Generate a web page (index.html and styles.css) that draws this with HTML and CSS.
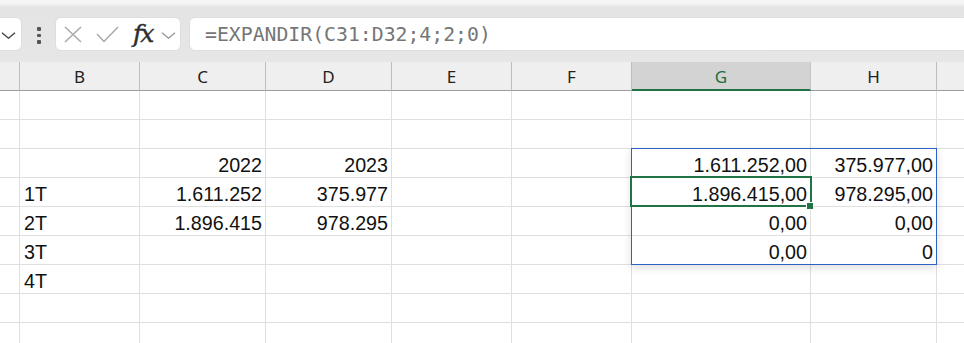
FILE: index.html
```html
<!DOCTYPE html>
<html>
<head>
<meta charset="utf-8">
<link rel="stylesheet" href="styles.css">
</head>
<body>
<div class="topbar">
  <div class="namebox">
    <svg class="chev" width="15" height="7" viewBox="0 0 15 7"><path d="M1 0.8 L7.5 6.2 L14 0.8" fill="none" stroke="#444" stroke-width="1.4"/></svg>
  </div>
  <div class="dots"><i></i><i></i><i></i></div>
  <div class="btnbox">
    <svg class="ic-x" width="18" height="17" viewBox="0 0 18 17"><path d="M1 1 L17 16 M17 1 L1 16" fill="none" stroke="#a9a9a9" stroke-width="1.5"/></svg>
    <svg class="ic-check" width="23" height="17" viewBox="0 0 23 17"><path d="M1 8 L8 15.5 L22 1" fill="none" stroke="#a9a9a9" stroke-width="1.5"/></svg>
    <span class="fx">fx</span>
    <svg class="ic-chev" width="15" height="7" viewBox="0 0 15 7"><path d="M1 0.8 L7.5 6.2 L14 0.8" fill="none" stroke="#9a9a9a" stroke-width="1.4"/></svg>
  </div>
  <div class="formula">=EXPANDIR(C31:D32;4;2;0)</div>
</div>

<div class="sheet">
  <div class="grid">
    <div class="h corner"></div><div class="h">B</div><div class="h">C</div><div class="h">D</div><div class="h">E</div><div class="h">F</div><div class="h sel">G</div><div class="h">H</div><div class="h last"></div>

    <div class="c rh"></div><div class="c"></div><div class="c"></div><div class="c"></div><div class="c"></div><div class="c"></div><div class="c"></div><div class="c"></div><div class="c last"></div>

    <div class="c rh"></div><div class="c"></div><div class="c"></div><div class="c"></div><div class="c"></div><div class="c"></div><div class="c"></div><div class="c"></div><div class="c last"></div>

    <div class="c rh"></div><div class="c"></div><div class="c num">2022</div><div class="c num">2023</div><div class="c"></div><div class="c"></div><div class="c num">1.611.252,00</div><div class="c num">375.977,00</div><div class="c last"></div>

    <div class="c rh"></div><div class="c">1T</div><div class="c num">1.611.252</div><div class="c num">375.977</div><div class="c"></div><div class="c"></div><div class="c num">1.896.415,00</div><div class="c num">978.295,00</div><div class="c last"></div>

    <div class="c rh"></div><div class="c">2T</div><div class="c num">1.896.415</div><div class="c num">978.295</div><div class="c"></div><div class="c"></div><div class="c num">0,00</div><div class="c num">0,00</div><div class="c last"></div>

    <div class="c rh"></div><div class="c">3T</div><div class="c"></div><div class="c"></div><div class="c"></div><div class="c"></div><div class="c num">0,00</div><div class="c num">0</div><div class="c last"></div>

    <div class="c rh"></div><div class="c">4T</div><div class="c"></div><div class="c"></div><div class="c"></div><div class="c"></div><div class="c"></div><div class="c"></div><div class="c last"></div>

    <div class="c rh"></div><div class="c"></div><div class="c"></div><div class="c"></div><div class="c"></div><div class="c"></div><div class="c"></div><div class="c"></div><div class="c last"></div>

    <div class="c rh"></div><div class="c"></div><div class="c"></div><div class="c"></div><div class="c"></div><div class="c"></div><div class="c"></div><div class="c"></div><div class="c last"></div>
  </div>
  <div class="spill"></div>
  <div class="active"></div>
  <div class="handle"></div>
</div>
</body>
</html>
```

FILE: styles.css
```css
* { box-sizing: border-box; }
html, body { margin: 0; padding: 0; background: #fff; overflow: hidden; }
body { width: 964px; height: 343px; font-family: "Liberation Sans", Arial, sans-serif; }

.topbar {
  height: 62px;
  background: linear-gradient(#f6f6f6 0, #f2f2f2 4px, #e4e4e4 7px, #e6e6e6 100%);
  display: flex;
  align-items: flex-start;
  padding-top: 17px;
}
.namebox {
  width: 22px;
  height: 34px;
  background: #fff;
  border: 1px solid #dedede;
  border-left: none;
  border-radius: 0 6px 6px 0;
  position: relative;
}
.namebox .chev { display: block; margin: 14px 0 0 1px; }
.dots {
  margin-left: 15px;
  width: 4px;
  height: 34px;
  display: flex;
  flex-direction: column;
  align-items: center;
  padding-top: 10px;
  gap: 3px;
}
.dots i { display: block; width: 3.5px; height: 3.5px; background: #555; border-radius: 1px; }
.btnbox {
  margin-left: 14px;
  width: 126px;
  height: 34px;
  background: #fff;
  border: 1px solid #dedede;
  border-radius: 6px;
  display: flex;
  align-items: center;
}
.btnbox .ic-x { margin-left: 8px; margin-top: 1px; }
.btnbox .ic-check { margin-left: 14px; margin-top: 1px; }
.btnbox .fx {
  margin-left: 14px;
  width: 23px;
  font-family: "DejaVu Serif", "Liberation Serif", serif;
  font-style: italic;
  font-size: 25px;
  letter-spacing: -2px;
  color: #2e2e2e;
  line-height: 1;
  margin-top: -1px;
  -webkit-text-stroke: 0.4px #2e2e2e;
}
.btnbox .ic-chev { margin-left: 5px; margin-top: 2px; }
.formula {
  margin-left: 8px;
  flex: 1;
  margin-right: -20px;
  height: 34px;
  background: #fff;
  border: 1px solid #dedede;
  border-radius: 6px;
  padding-left: 15px;
  padding-top: 1px;
  font-family: "DejaVu Sans Mono", monospace;
  font-size: 19.8px;
  line-height: 31px;
  color: #767676;
  white-space: nowrap;
}

.sheet { position: relative; }
.grid {
  display: grid;
  grid-template-columns: 20px 120px 126px 126px 120px 120px 179px 126px 1fr;
  grid-auto-rows: 29px;
}
.h {
  background: #efefef;
  border-right: 1px solid #bdbdbd;
  border-bottom: 1px solid #9d9d9d;
  font-family: "Noto Sans", "Open Sans", sans-serif;
  font-size: 17px;
  color: #222;
  text-align: center;
  line-height: 28px;
  padding-top: 1px;
}
.h.sel {
  background: #d3d3d3;
  color: #1e6e43;
  border-bottom: 2px solid #217346;
  border-right: 1px solid #c4c4c4;
}
.h.last { border-right: none; }
.c {
  border-right: 1px solid #dfdfdf;
  border-bottom: 1px solid #dfdfdf;
  font-size: 19.7px;
  line-height: 24px;
  padding: 4px 4px 0 4px;
  color: #111;
  white-space: nowrap;
  overflow: hidden;
}
.c.num { text-align: right; padding-right: 3px; }
.c.last { border-right: none; }

.spill {
  position: absolute;
  left: 631px;
  top: 86px;
  width: 306px;
  height: 117px;
  border: 1px solid #2d62c4;
  box-shadow: 0 3px 9px rgba(0, 0, 0, 0.13);
  pointer-events: none;
}
.active {
  position: absolute;
  left: 630px;
  top: 114px;
  width: 182px;
  height: 31px;
  border: 2px solid #217346;
}
.handle {
  position: absolute;
  left: 806px;
  top: 140px;
  width: 8px;
  height: 8px;
  background: #217346;
  border: 1px solid #fff;
}
```
